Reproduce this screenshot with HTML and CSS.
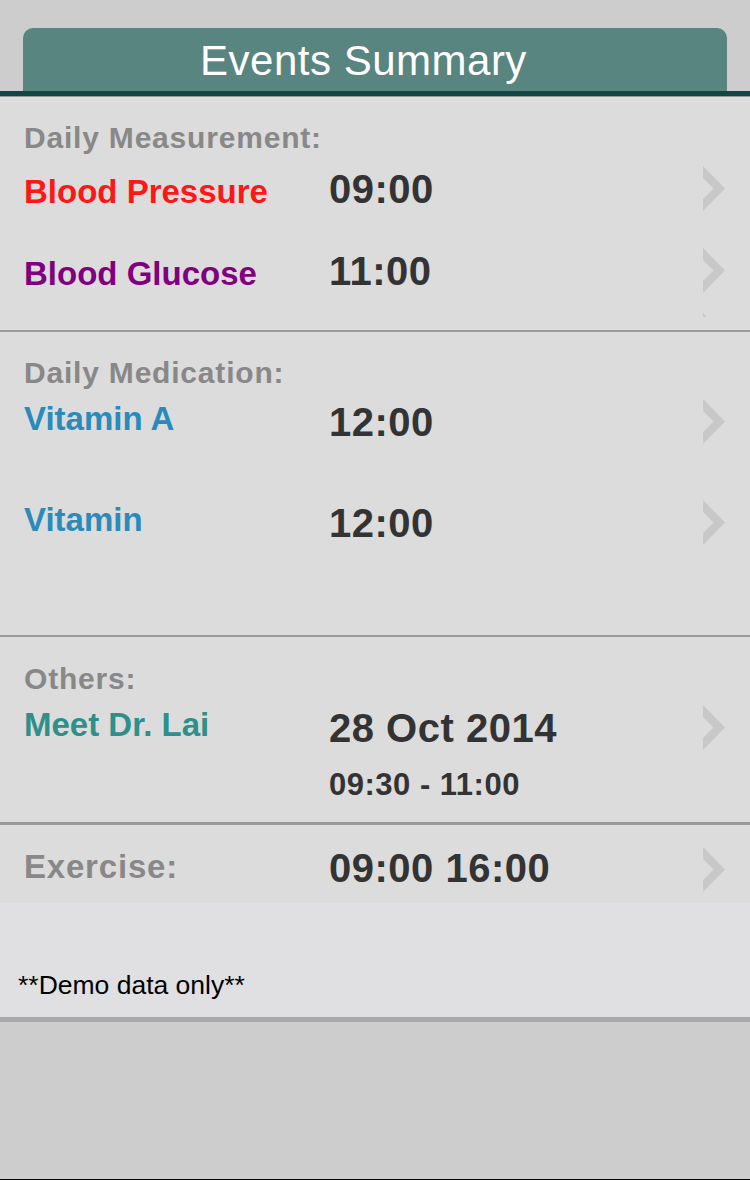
FILE: index.html
```html
<!DOCTYPE html>
<html lang="en">
<head>
<meta charset="utf-8">
<title>Events Summary</title>
<link rel="stylesheet" href="styles.css">
</head>
<body>
<div class="screen">
  <header class="topbar">
    <div class="tab"><h1 class="title">Events Summary</h1></div>
  </header>
  <main class="list">
    <section class="group g-measure">
      <h2 class="group-title">Daily Measurement:</h2>
      <div class="row row-base">
        <span class="label c-red">Blood Pressure</span>
        <span class="time">09:00</span>
        <svg class="chev" viewBox="0 0 22 45"><path d="M0 0 L22 22.5 L0 45 L0 33 L10.5 22.5 L0 12 Z"/></svg>
      </div>
      <div class="row row-base row-next1">
        <span class="label c-purple">Blood Glucose</span>
        <span class="time">11:00</span>
        <svg class="chev" viewBox="0 0 22 45"><path d="M0 0 L22 22.5 L0 45 L0 33 L10.5 22.5 L0 12 Z"/></svg>
      </div>
      <div class="stub"><svg class="chev" viewBox="0 0 22 45"><path d="M0 0 L22 22.5 L0 45 L0 33 L10.5 22.5 L0 12 Z"/></svg></div>
    </section>
    <section class="group g-med">
      <h2 class="group-title">Daily Medication:</h2>
      <div class="row row-first">
        <span class="label c-blue">Vitamin A</span>
        <span class="time">12:00</span>
        <svg class="chev" viewBox="0 0 22 45"><path d="M0 0 L22 22.5 L0 45 L0 33 L10.5 22.5 L0 12 Z"/></svg>
      </div>
      <div class="row row-next2">
        <span class="label c-blue">Vitamin</span>
        <span class="time">12:00</span>
        <svg class="chev" viewBox="0 0 22 45"><path d="M0 0 L22 22.5 L0 45 L0 33 L10.5 22.5 L0 12 Z"/></svg>
      </div>
    </section>
    <section class="group g-others">
      <h2 class="group-title">Others:</h2>
      <div class="row row-first">
        <span class="label c-teal">Meet Dr. Lai</span>
        <div class="when">
          <div class="time">28 Oct 2014</div>
          <div class="subtime">09:30 - 11:00</div>
        </div>
        <svg class="chev" viewBox="0 0 22 45"><path d="M0 0 L22 22.5 L0 45 L0 33 L10.5 22.5 L0 12 Z"/></svg>
      </div>
    </section>
    <section class="group g-exercise">
      <div class="row">
        <span class="label label-heading">Exercise:</span>
        <span class="time">09:00 16:00</span>
        <svg class="chev chev-low" viewBox="0 0 22 45"><path d="M0 0 L22 22.5 L0 45 L0 33 L10.5 22.5 L0 12 Z"/></svg>
      </div>
    </section>
  </main>
  <footer class="note">**Demo data only**</footer>
  <div class="rest"></div>
</div>
</body>
</html>
```

FILE: styles.css
```css
* {
  box-sizing: border-box;
  margin: 0;
  padding: 0;
}

body {
  margin: 0;
  background: #cdcdcd;
  font-family: "Liberation Sans", Arial, sans-serif;
}

.screen {
  height: 1180px;
  display: flex;
  flex-direction: column;
  border-bottom: 1px solid #000;
}

.topbar {
  padding: 28px 23px 0;
  border-bottom: 5px solid #0e4746;
}

.tab {
  height: 63px;
  background: #58857f;
  border-radius: 10px 10px 0 0;
}

.title {
  font-size: 42px;
  font-weight: 400;
  color: #fff;
  line-height: 61px;
  padding-top: 2px;
  padding-right: 23px;
  text-align: center;
  letter-spacing: 0.5px;
}

.list {
  background: #dcdcdc;
  border-top: 1px solid #999;
}

.group {
  padding-left: 24px;
  padding-right: 25px;
}

.g-measure {
  padding-top: 24px;
  padding-bottom: 13px;
}

.g-med {
  border-top: 2px solid #9a9a9a;
  padding-top: 24px;
  padding-bottom: 89px;
}

.g-others {
  border-top: 2px solid #9a9a9a;
  padding-top: 25px;
  padding-bottom: 19px;
}

.g-exercise {
  border-top: 3px solid #9a9a9a;
  padding-top: 20px;
  padding-bottom: 11px;
}

.group-title,
.label-heading {
  font-size: 30px;
  font-weight: 700;
  color: #888;
  letter-spacing: 0.8px;
}

.group-title {
  line-height: 34px;
}

.row {
  display: flex;
  align-items: flex-start;
}

.g-measure .row {
  margin-top: 11px;
}

.g-measure .row-next1 {
  margin-top: 36px;
}

.row-first {
  margin-top: 9px;
}

.row-next2 {
  margin-top: 55px;
}

.row-base {
  align-items: baseline;
}

.label {
  width: 305px;
  flex: none;
  font-size: 33px;
  font-weight: 700;
  line-height: 40px;
}

.row-base .label {
  line-height: 41px;
}

.label-heading {
  line-height: 43px;
}

.c-red { color: #ff1616; }
.c-purple { color: #800080; }
.c-blue { color: #2a8bbb; }
.c-teal { color: #2f8f8a; }

.time {
  flex: 1;
  font-size: 40px;
  font-weight: 700;
  color: #333;
  line-height: 46px;
  letter-spacing: 0.5px;
}

.when {
  flex: 1;
}

.subtime {
  margin-top: 16px;
  font-size: 31px;
  font-weight: 700;
  color: #333;
  line-height: 36px;
  letter-spacing: 0.5px;
}

.chev {
  width: 22px;
  height: 45px;
  flex: none;
  align-self: flex-start;
  fill: #c8c8c8;
  display: block;
}

.chev-low {
  margin-top: 2px;
}

.stub {
  width: 22px;
  height: 4px;
  overflow: hidden;
  margin: 19px 0 0 auto;
}

.note {
  background: #e0e0e2;
  padding: 67px 18px 17px;
  font-size: 26.5px;
  line-height: 30px;
  color: #000;
  border-bottom: 5px solid #a9a9a9;
}

.rest {
  flex: 1;
  background: #cdcdcd;
}
```
